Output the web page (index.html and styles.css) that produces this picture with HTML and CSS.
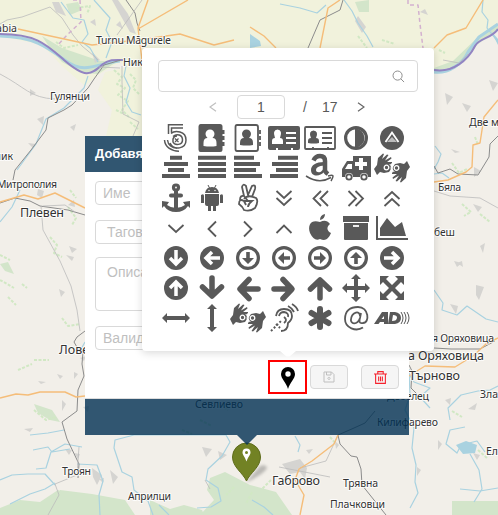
FILE: index.html
```html
<!DOCTYPE html>
<html lang="bg">
<head>
<meta charset="utf-8">
<title>Добавяне</title>
<link rel="stylesheet" href="styles.css">
</head>
<body>
<main class="map">
<svg class="tiles" viewBox="0 0 498 515">
  <path class="plain" d="M0 0H498V25L480 40 466 57 450 68 434 74 140 78 120 62 98 75 85 86 62 66 42 45 0 36Z"/>
  <path class="plain" d="M105 72L142 64V136H106L112 110 98 90Z"/>
  <g class="wood">
    <path d="M42 36L62 48 100 61 118 61 98 74 82 73 62 62 50 48Z"/>
    <path d="M0 508L20 500 40 502 58 490 70 494 68 515H0Z"/>
    <path d="M60 490L92 494 125 500 135 515H58Z"/>
    <path d="M210 478L225 472 250 485 276 492 292 515H200L214 500 207 490Z"/>
    <path d="M150 500L170 509 184 505 202 510 204 515H150Z"/>
    <path d="M452 501H498V515H452Z"/>
    <path d="M434 68L453 61 480 35 498 24V30L478 44 458 66 434 71Z"/>
    <path d="M355 2L369 0V12H359Z"/>
    <path d="M34 404L52 410 60 422 50 420 38 413ZM66 4L78 2 82 10 70 15ZM0 264L8 262 14 274 5 271Z"/>
  </g>
  <g class="scrub">
    <path d="M114 70l8 7-5 7 8 4-7 7 10 6-6 9 7 7M130 74l6 6-3 8 7 7M116 110l8 4M130 122l8 7M76 8l14-2-3 8M56 42l8 6 14-3"/>
    <path d="M50 237l7 8-3 8 8 4M68 207l8 11-4 7M70 190l6 8M0 255l10 5M0 280l14 8M8 297l8 8M22 284l5 4M18 370l14-6M34 360h15M62 318l6 8 12-2M34 410l12 10 10-3M182 430l10 4M200 420l12 6"/>
    <path d="M462 204l9 8-7 4M480 214l10 8M452 163l7 10 8-4M475 137l3 8M382 40l13 4M410 58l8 4M358 36l9 12M439 50l6 3M452 411l10 6M478 450l9 8"/>
    <path d="M220 405l8 5M234 487l-8 8M252 492l-6 12M271 480l-9 9M330 437l7 8"/>
  </g>
  <g class="town">
    <path d="M52 2l7 0 7 14-10-4zM112 0h6l10 14 8 20-6-2-8-14zM92 52l8 8-5 3zM30 89l6 4-6 3zM28 143l8 1-3 4zM70 127l6-3-2 7zM116 25l4-4 3 8zM68 205l6-5 1 7zM90 22l5-3 1 7zM38 189l6 2-2 7-5-3zM66 255l8 2-2 4zM37 119l7-3-1 9zM80 358l6-2-2 5zM24 429l9-1-3 4zM74 372l4 2-4 5zM38 381l8 1-5 2zM92 468l10 7-5 10-4-8zM74 453l6 1-2 5z"/>
    <path d="M358 16l8 11-4 6-7-12zM445 93l8 4-6 8zM462 103l9 3-4 6zM489 80l9 3-5 8zM474 167l7 4-7 6zM451 149l9 3-5 1zM473 204l9 3-4 5zM450 304l8 2-2 8zM457 263l5-2 1 6zM476 285l8 2-5 13-3-5zM480 246l5-3-2 10zM454 261l8 2-5 4zM445 400l6-2-1 7zM468 409l9-6-2 7zM438 440l4 4-4 6zM306 450l7-1-4 5zM335 441l4 4-3 4zM282 464l18-5 7 9-2 11-5-7-10 2zM405 361l4 8-4 4zM417 467l4 3-4 6zM202 447l10 2-6 8zM218 451l9 4-7 5zM110 470l8 7-5 7z"/>
    <path d="M124 188l7 8-5 5zM102 204l8 4-5 7zM126 211l8-6-1 8zM59 289l6 3-4 5zM81 350l5-3-1 7zM62 400l4 4-4 7zM65 449l7 1-3 5zM83 407l6-1-1 6zM99 479l5-1-1 5zM400 342h8l-4 7zM473 453l7 2-3 5zM420 12l5-3 3 6zM69 246l8 3-5 4zM57 374l6 2-3 3z"/>
  </g>
  <g class="water">
    <path d="M61 2L73 18 84 20 88 34 82 42 90 48 98 62M94 0L110 18 106 30 112 42 106 58"/>
    <path d="M88 76L84 88 64 108 46 119 36 144 17 170M20 190L12 207 0 222M126 66L124 76 130 88 126 102 132 112 141 115"/>
    <path d="M280 4L300 8 317 13 326 5M344 0L352 11 358 23 367 36 373 47M483 0L482 12 488 20 487 28 498 42"/>
    <path d="M435 146L441 154 438 162 434 169M434 174L442 173 449 178M434 290L443 303 442 310 457 315 467 306 486 319 498 322"/>
    <path d="M80 351l5-9M30 435L48 433 64 430M33 450L48 447 52 452 70 449M36 469L46 468 51 452 65 444 82 447"/>
    <path d="M0 480L12 475 28 474 45 474 55 485M10 504L30 494 45 489 55 483M77 464L97 465 103 481 99 495 100 515"/>
    <path d="M226 435L134 435 115 440 114 448 122 472 132 477 134 490 148 501 153 515M159 505L169 515M226 435L230 442 222 456 208 469 206 480 218 488 221 501 211 507 197 508"/>
    <path d="M409 369L410 395 405 410 414 428 412 448 416 465 415 482 418 493 410 508M465 427L450 430 446 444 457 453 461 445 477 441 485 452M450 420L448 408 461 395 478 391 490 390 498 386M470 454L479 470 482 489 474 502"/>
    <path d="M409 374L414 382 430 388 420 397 430 408M252 500L264 507 273 515M460 489L480 491 498 488M295 436L300 445 298 452"/>
  </g>
  <path class="lake" d="M250 34L260 41 261 46 250 48ZM456 445L466 441 477 445 475 453 463 454ZM491 31L498 39 498 45Z"/>
  <path class="river-edge" d="M0 36C35 37 47 47 66 61S98 63 120 61"/>
  <path class="river-edge" d="M434 72C449 74 463 63 468 52L479 37 498 24"/>
  <path class="danube" d="M0 34C37 34 47 45 64 60C85 78 90 76 103 64C110 59 116 60 123 60M434 70C453 73 468 60 475 46C479 38 491 39 498 29"/>
  <g class="rail">
    <path d="M121 60L104 65 94 79 88 88 72 105 64 110 48 118 46 130 31 150 15 170 13 180M126 0L135 13 137 23 140 31M308 48L320 20 340 10 343 0"/>
    <path d="M0 203L15 198 30 201 40 206 68 210 85 215M85 331L77 337 74 342 78 349 83 352 82 364 84 376 78 390 77 411 62 422 67 439 79 464 78 478"/>
    <path d="M434 166L438 173 450 169 458 174 478 175 489 157 490 144 498 136M409 365L412 371 411 388 420 397M338 435L354 428 365 423 375 411M338 435L340 444 351 456 357 457 361 469 362 485 374 500 386 515M434 348L451 349 480 349 495 341"/>
  </g>
  <g class="road">
    <path d="M0 74C25 87 30 98 55 99M0 24L7 20 22 17 50 7 62 18 73 35 82 46 94 56 98 60M142 0L117 35M99 67L120 68M41 206L43 230 60 261 71 286 77 310 80 331M79 447L77 475 55 484 59 495 48 515M43 206L65 205 75 212M122 66V82L123 114 139 122 133 136"/>
    <path d="M443 60L459 63 468 54M434 191L450 196 480 198 498 208M205 480L210 489M338 435L326 461 300 468M279 467L330 477"/>
  </g>
  <path class="region" d="M73 0H80L81 22 67 35 58 45M408 0V5H418L420 24 423 48"/>
  <g class="main-road">
    <path d="M18 29L92 45 138 40 180 34 214 45 234 40M148 0L138 28 142 60M188 0L138 29M320 48L328 8 340 0M250 27L264 36 276 48M434 48L447 35 466 28 483 0"/>
    <path d="M0 202L24 195 38 199 55 193 85 208M0 398L16 394 28 395 40 392 65 392 76 397 85 396M434 182L448 180 466 172 472 167 473 145 480 143 484 117 498 100M409 376L425 366 455 367 473 356 486 344 498 338M338 435L334 444 312 461 299 469 295 480 304 495 300 515"/>
  </g>
  <g class="label">
    <text class="to-edge" x="17" y="32">abia</text>
    <text x="96" y="44" textLength="75">Turnu Măgurele</text>
    <text x="123" y="66">Никопол</text>
    <text x="50" y="100" textLength="40">Гулянци</text>
    <text class="to-edge" x="13" y="160">ник</text>
    <text x="-3" y="188" textLength="60">Митрополия</text>
    <text class="city" x="20" y="217" textLength="44">Плевен</text>
    <text class="city" x="59" y="354">Ловеч</text>
    <text x="62" y="475" textLength="29">Троян</text>
    <text x="128" y="500" textLength="43">Априлци</text>
    <text x="195" y="408" textLength="48">Севлиево</text>
    <text class="city" x="272" y="485" textLength="48">Габрово</text>
    <text x="343" y="487" textLength="35">Трявна</text>
    <text x="330" y="508" textLength="55">Плачковци</text>
    <text x="377" y="426" textLength="61">Килифарево</text>
    <text x="387" y="400" textLength="42">Дебелец</text>
    <text class="city" x="409" y="380" textLength="51">Търново</text>
    <text class="city" x="408" y="360" textLength="76">а Оряховица</text>
    <text x="432" y="342" textLength="62">я Оряховица</text>
    <text x="480" y="398">Златарица</text>
    <text x="486" y="455">Елена</text>
    <text x="469" y="126">Две могили</text>
    <text x="438" y="191" textLength="23">Бяла</text>
    <text x="434" y="236" textLength="21">беш</text>
  </g>
</svg>

<svg class="marker" viewBox="0 0 46 44">
  <path class="marker-shade" d="M17 39L30 24Q36 22 37 26 34 32 17 40Z"/>
  <path class="marker-body" d="M16.500 39C13 31 2.500 25 2.500 15A14 14 0 0 1 30.500 15C30.500 25 20 31 16.500 39Z"/>
  <path class="marker-pin" d="M16.500 19.500C15 15 12.500 13 12.500 10.500A4 4 0 0 1 20.500 10.500C20.500 13 18 15 16.500 19.500ZM16.500 9A1.500 1.500 0 1 0 16.500 12 1.500 1.500 0 0 0 16.500 9Z"/>
</svg>

<section class="popup">
  <header class="popup-head">Добавяне</header>
  <div class="popup-body">
    <div class="field">Име</div>
    <div class="field tags">Тагове</div>
    <div class="field area">Описание</div>
    <div class="field">Валидност</div>
    <div class="actions">
      <div class="pin-choice"><svg viewBox="0 0 14 22"><path fill-rule="evenodd" d="M7 22C5 15 0 12 0 7A7 7 0 0 1 14 7C14 12 9 15 7 22ZM7 4.300A2.700 2.700 0 1 0 7 9.700 2.700 2.700 0 0 0 7 4.300Z"/></svg></div>
      <div class="button save"><svg viewBox="0 0 12 12"><path d="M1 1H8.500L11 3.500V11H1ZM3.500 1V4H8V1M6 6.300A1.100 1.100 0 1 1 5.990 6.300"/></svg></div>
      <div class="button delete"><svg viewBox="0 0 12 12"><path d="M0 2.700H12M3.500 2.500V.6H8.500V2.500M1.500 3V11.400H10.500V3M4.300 5V9.500M6 5V9.500M7.700 5V9.500"/></svg></div>
    </div>
  </div>
  <footer class="popup-foot"></footer>
  <div class="popup-tip"></div>
</section>

<section class="picker">
  <div class="search"><svg viewBox="0 0 14 14"><circle cx="6" cy="6" r="4.900"/><path d="M9.600 9.600L13 13"/></svg></div>
  <nav class="pager">
    <svg class="prev" viewBox="0 0 8 10"><path d="M7 .7L1 5 7 9.300"/></svg>
    <span class="page">1</span><span class="slash">/</span><span class="total">17</span>
    <svg class="next" viewBox="0 0 8 10"><path d="M1 .7L7 5 1 9.300"/></svg>
  </nav>
  <div class="icons">
    <svg viewBox="-18 -15 36 30"><path class="l15" d="M7-13.300H-7.500V-4M7-10H-4.500V-5.500M-5-4.500C-1-8 10-7 10 2C10 11-2 13-6 5M-11.500 2C-11 9-5 13 3 13.300M-8.500 2C-8 7-4 10 1 10.300M-3-1.500C1-5 6.500-3 6.500 2C6.500 7-1 8-3 4V1Q-2-2 1-2"/><path class="l1" d="M-1 .5L2.500 4M2.500 .5L-1 4"/></svg>
    <svg viewBox="-18 -15 36 30"><path d="M-11.500-14H8Q10.500-14 10.500-11.500V-8H12.500V-4H10.500V-2H12.500V2H10.500V4H12.500V8H10.500V11.500Q10.500 14 8 14H-11.500Q-13.500 14-13.500 11.500V-11.500Q-13.500-14-11.500-14Z"/><path class="w" d="M-8.500 8V5Q-8.500 0-4.500 0Q-6.500-2-6.500-4A4.500 4.500 0 0 1 2.500-4Q2.500-2 .5 0Q4.500 0 4.500 5V8Q-1.500 9-8.500 8Z"/></svg>
    <svg viewBox="-18 -15 36 30"><path class="l2" d="M-11-13H8Q10-13 10-11V11Q10 13 8 13H-11Q-12.500 13-12.500 11V-11Q-12.500-13-11-13ZM12-8V-4M12-2V2M12 4V8"/><path d="M-8 7V5Q-8 0-4 0Q-6-2-6-4A4.500 4.500 0 0 1 3-4Q3-2 1 0Q5 0 5 5V7Q-1 8-8 7Z"/></svg>
    <svg viewBox="-18 -15 36 30"><path d="M-14-12H14Q16-12 16-10V10Q16 12 14 12H9V10H7V12H-6V10H-8V12H-14Q-16 12-16 10V-10Q-16-12-14-12Z"/><path class="w" d="M-12 6V3Q-12 0-9 0Q-12-8-6.500-8.500Q-1-8-4 0Q-1 0-1 3V6Z"/><path class="lw" d="M2-5H12M2 0H12M2 5H12"/></svg>
    <svg viewBox="-18 -15 36 30"><path class="l2" d="M-14-11H14Q15-11 15-10V10Q15 11 14 11H-14Q-15 11-15 10V-10Q-15-11-14-11ZM-7 11V9M8 11V9"/><path d="M-12 5V3Q-12 0-9 0Q-12-7-6.500-7.500Q-1-7-4 0Q-1 0-1 3V5Q-6 6-12 5Z"/><path class="l2" d="M2-5H12M2 0H12M2 5H12"/></svg>
    <svg viewBox="-18 -15 36 30"><circle class="l3" r="10.400"/><path d="M-1-9.500A9.500 9.500 0 0 1-1 9.500Z"/></svg>
    <svg viewBox="-18 -15 36 30"><circle r="12"/><path class="lw" d="M-6.500 4L0-5.500 6.500 4"/><path class="pale" d="M-5 4L0-1 5 4Z"/></svg>

    <svg viewBox="-18 -15 36 30"><path class="bars" d="M-6-10.300H6M-12-4H12M-8 2H8M-14 8H14"/></svg>
    <svg viewBox="-18 -15 36 30"><path class="bars" d="M-14-10.300H14M-14-4H14M-14 2H14M-14 8H14"/></svg>
    <svg viewBox="-18 -15 36 30"><path class="bars" d="M-14-10.300H6M-14-4H12M-14 2H8M-14 8H14"/></svg>
    <svg viewBox="-18 -15 36 30"><path class="bars" d="M-6-10.300H14M-12-4H14M-8 2H14M-14 8H14"/></svg>
    <svg viewBox="-18 -15 36 30"><path class="l5" d="M-6.500-7.500Q-4.500-12 0-12Q5-12 5-7V2Q5 4 8 6"/><path d="M4-6C-4-6-9-3-9 2C-9 9 0 9 4 4V-1C2 6-4 5-4 2Q-4-2 4-2.500Z"/><path class="l15" d="M-14 8Q-1 16.500 11 9.500M8 8Q13 6.500 13 8 13 10 11 13"/></svg>
    <svg viewBox="-18 -15 36 30"><path d="M-3-12H15V9H12A4 4 0 0 0 4 9H-3A4 4 0 0 0-11 9H-14V1L-9-7H-3Z"/><path class="w" d="M-11 1L-8-4H-4V1ZM3-10H7V-6H11V-2H7V2H3V-2H-1V-6H3Z"/><circle class="l2" cx="-7" cy="9" r="2.700"/><circle class="l2" cx="8" cy="9" r="2.700"/></svg>
    <svg viewBox="-18 -15 36 30"><g id="hands"><path id="hand" d="M-18 1L-15-3-14-10-9-14.500-8-14-10-9-5-13.500-3.500-13-7-7.500-1-11-.5-9.500-5-6 0-6V-4L-3-3.500Q0-2-1 1L-3 4-8 5-12 4-15 7Z"/><circle class="hole" cx="-5.500" cy="-.5" r="2.300"/><use href="#hand" transform="rotate(180)"/><circle class="hole" cx="4.500" cy="0" r="2.300"/><path class="gap" d="M0-5Q-2 0 0 5"/></g></svg>

    <svg viewBox="-18 -15 36 30"><circle class="l3" cx="0" cy="-10.500" r="2.500"/><path class="l4" d="M0-7V10M-5-2.500H5"/><path d="M-14 3L-7 4-9 7Q-5 10 0 10T9 7L7 4 14 3V10L12 8Q8 14 0 14T-12 8L-14 10Z"/></svg>
    <svg viewBox="-18 -15 36 30"><path d="M-7-5Q-6-11 0-11T7-5ZM-7-4H7V6Q7 8 5 8H4V13H1V8H-1V13H-4V8H-5Q-7 8-7 6ZM-11-3Q-8-5-8-2V5H-11ZM8-3Q11-5 11-2V5H8Z"/><path class="thin" d="M-4-13L-2-9M4-13L2-9"/><circle class="w" cx="-3" cy="-7.500" r=".7"/><circle class="w" cx="3" cy="-7.500" r=".7"/></svg>
    <svg viewBox="-18 -15 36 30"><path class="l2" d="M-4-2L-6-11Q-5-15-2-12L0-3 4-12Q8-14 7-9L4-1M-4 1Q0-4 8 0Q11 3 7 10Q2 14-4 12Q-5 9-9 6Q-9 0-4 3L-2 7M-8 2Q-8-3-4-2L0 3-4 3M-1 3H4Q0 6 0 9"/></svg>
    <svg viewBox="-18 -15 36 30"><path class="chev" d="M-7.500-7L0 0 7.500-7M-7.500 0L0 7 7.500 0"/></svg>
    <svg viewBox="-18 -15 36 30"><path class="chev" d="M1-7L-6.500 .5 1 8M8-7L.5 .5 8 8"/></svg>
    <svg viewBox="-18 -15 36 30"><path class="chev" d="M-7.500-7L0 .5-7.500 8M-.5-7L7 .5-.5 8"/></svg>
    <svg viewBox="-18 -15 36 30"><path class="chev" d="M-7.500 1L0-6 7.500 1M-7.500 8L0 1 7.500 8"/></svg>

    <svg viewBox="-18 -15 36 30"><path class="chev" d="M-7.500-3L0 4 7.500-3"/></svg>
    <svg viewBox="-18 -15 36 30"><path class="chev" d="M4-6.500L-3.500 1 4 8.500"/></svg>
    <svg viewBox="-18 -15 36 30"><path class="chev" d="M-4-6.500L3.500 1-4 8.500"/></svg>
    <svg viewBox="-18 -15 36 30"><path class="chev" d="M-7.500 5L0-2.500 7.500 5"/></svg>
    <svg viewBox="-18 -15 36 30"><path d="M0-6C4-8 7-8 10-4C6-1 7 3 11 5C8 12 5 13 0 11C-4 13-7 11-10 5C-13-4-8-9 0-6ZM0-8Q0-13 5-14Q5-9 0-8Z"/></svg>
    <svg viewBox="-18 -15 36 30"><path d="M-13-12H13V-6H-13ZM-12-5H12V11Q12 12 11 12H-11Q-12 12-12 11Z"/><path class="lw" d="M-3-2H3"/></svg>
    <svg viewBox="-18 -15 36 30"><path class="square" d="M-15-12V11H16"/><path d="M-12 8V0L-5-10 3-1 10-6 14 8Z"/></svg>

    <svg viewBox="-18 -15 36 30"><circle r="12"/><path class="aw" d="M0-8V5M-6 0L0 6 6 0"/></svg>
    <svg viewBox="-18 -15 36 30"><circle r="12"/><path class="aw" d="M8 0H-5M0-6L-6 0 0 6"/></svg>
    <svg viewBox="-18 -15 36 30"><circle class="l3" r="10.400"/><path d="M-1.800-6H1.800V0H6L0 6-6 0H-1.800Z"/></svg>
    <svg viewBox="-18 -15 36 30"><circle class="l3" r="10.400"/><path d="M6-1.800V1.800H0V6L-6 0 0-6V-1.800Z"/></svg>
    <svg viewBox="-18 -15 36 30"><circle class="l3" r="10.400"/><path d="M-6-1.800V1.800H0V6L6 0 0-6V-1.800Z"/></svg>
    <svg viewBox="-18 -15 36 30"><circle class="l3" r="10.400"/><path d="M-1.800 6H1.800V0H6L0-6-6 0H-1.800Z"/></svg>
    <svg viewBox="-18 -15 36 30"><circle r="12"/><path class="aw" d="M-8 0H5M0-6L6 0 0 6"/></svg>

    <svg viewBox="-18 -15 36 30"><circle r="12"/><path class="aw" d="M0 8V-5M-6 0L0-6 6 0"/></svg>
    <svg viewBox="-18 -15 36 30"><path class="arrow" d="M0-10V7M-9.500-1L0 8 9.500-1"/></svg>
    <svg viewBox="-18 -15 36 30"><path class="arrow" d="M10 1H-7M1-8.500L-8 1 1 10.500"/></svg>
    <svg viewBox="-18 -15 36 30"><path class="arrow" d="M-10 1H7M-1-8.500L8 1-1 10.500"/></svg>
    <svg viewBox="-18 -15 36 30"><path class="arrow" d="M0 10V-7M-9.500 1L0-8 9.500 1"/></svg>
    <svg viewBox="-18 -15 36 30"><path d="M0-14L5-9H2V-2H9V-5L14 0 9 5V2H2V9H5L0 14-5 9H-2V2H-9V5L-14 0-9-5V-2H-2V-9H-5Z"/></svg>
    <svg viewBox="-18 -15 36 30"><path d="M-12-12H-3L-6-9 0-3 6-9 3-12H12V-3L9-6 3 0 9 6 12 3V12H3L6 9 0 3-6 9-3 12H-12V3L-9 6-3 0-9-6-12-3Z"/></svg>

    <svg viewBox="-18 -15 36 30"><path d="M-14 0L-9-5V-2H9V-5L14 0 9 5V2H-9V5Z"/></svg>
    <svg viewBox="-18 -15 36 30"><path d="M0-14L5-9H2V9H5L0 14-5 9H-2V-9H-5Z"/></svg>
    <svg viewBox="-18 -15 36 30"><use href="#hands"/></svg>
    <svg viewBox="-18 -15 36 30"><path class="l2" d="M-8-2Q-7-9 0-9Q8-9 8-2Q8 2 4 5Q4 13-3 13M-5-2Q-4-6 0-6Q5-5 4-1M0-1Q4 2 0 5M4-12Q8-10 10-6M8-14Q13-11 14-7"/><path class="dots" d="M-13 13L-3 3M-8 6L-4 10"/></svg>
    <svg viewBox="-18 -15 36 30"><path class="asterisk" d="M0-9V9M-8.500-5L8.500 5M-8.500 5L8.500-5"/></svg>
    <svg viewBox="-18 -15 36 30"><path class="l2" d="M7 9.500C0 14-11 10-11 1C-11-7-6-11 2-11C13-11 14 5 7 5C3 6 3 3 4 0L5-5M4 0C1 8-6 6-5 1C-4-6 4-8 4-2"/></svg>
    <svg viewBox="-18 -15 36 30"><path fill-rule="evenodd" d="M-18 6L-10-6H-4V6H-8V4H-12L-13.500 6ZM-8-2L-10.500 1H-8ZM-2-6H3Q9-5 9 0T3 6H-4ZM1-3L0 3Q5 3 5-.5Q5-3 1-3Z"/><path class="thin" d="M9-6Q13 0 9 6M12-6Q16 0 12 6M15-6Q19 0 15 6"/></svg>
  </div>
  <div class="picker-tip"></div>
</section>
</main>
</body>
</html>
```

FILE: styles.css
```css
* { box-sizing: border-box; }
body { margin: 0; font: 14px "Liberation Sans", sans-serif; }
svg { display: block; }
.map { position: relative; width: 498px; height: 515px; overflow: hidden; background: #f2efe9; }
.tiles { width: 498px; height: 515px; fill: none; stroke-linejoin: round; }
.plain { fill: #f1f2dc; }
.wood { fill: #d3e5ca; }
.scrub { stroke: #d1e8c4; stroke-width: 2; stroke-dasharray: 3 1.5; }
.town { fill: #d5d4d1; }
.water { stroke: #a9d2e0; stroke-width: 1.2; }
.lake { fill: #a9d2e0; }
.river-edge { stroke: #a9d2e0; stroke-width: 3; }
.danube { stroke: #9284c2; stroke-width: 2; }
.rail { stroke: #8c8c8c; stroke-width: 1; }
.road { stroke: #bbb; stroke-width: .8; }
.main-road { stroke: #f5bd79; stroke-width: 1.4; }
.region { stroke: #d3b1cf; stroke-width: 1.5; stroke-dasharray: 4 3; }
.label { font: 10.500px "Noto Sans", sans-serif; fill: #333; stroke: #fff; stroke-width: 2px; stroke-opacity: .8; paint-order: stroke; }
.label .city { font-size: 12.500px; }
.label .to-edge { text-anchor: end; }

.marker { position: absolute; left: 230px; top: 442px; width: 46px; height: 44px; }
.marker-shade { fill: #555; opacity: .35; filter: blur(1.500px); }
.marker-body { fill: #728224; stroke: #5f6d1c; stroke-width: 1; }
.marker-pin { fill: #fff; fill-rule: evenodd; }

.popup { position: absolute; left: 85px; top: 136px; width: 324px; }
.popup-head, .popup-foot { height: 36px; background: rgba(0, 47, 83, .8); }
.popup-head { padding: 0 10px; line-height: 36px; font-size: 13px; font-weight: bold; color: #fff; }
.popup-body { height: 227px; padding: 9px 10px 0; background: #fff; border-bottom: 1px solid #ddd; }
.popup-tip { width: 20px; height: 10px; margin: 0 auto; background: rgba(0, 47, 83, .8); clip-path: polygon(0 0, 100% 0, 50% 100%); }
.field { height: 24px; margin-bottom: 15px; padding: 0 7px; border: 1px solid #d9d9d9; border-radius: 4px; line-height: 22px; color: #bfbfbf; }
.tags { margin-bottom: 13px; padding-left: 11px; }
.area { height: 54px; padding: 3px 11px; }
.actions { display: flex; align-items: center; justify-content: flex-end; margin-top: -5px; height: 34px; }
.pin-choice { display: flex; align-items: center; justify-content: center; width: 39px; height: 34px; padding-top: 1px; border: 2px solid #f00; }
.pin-choice svg { width: 14px; height: 22px; }
.button { display: flex; align-items: center; justify-content: center; width: 38px; height: 24px; background: #f5f5f5; border: 1px solid #d9d9d9; border-radius: 4px; }
.button svg { width: 13px; height: 13px; fill: none; stroke: #bfbfbf; }
.save { margin: 0 13px 0 3px; }
.save svg { width: 12px; height: 12px; }
.delete svg { stroke: #f5222d; }

.picker { position: absolute; left: 142px; top: 48px; width: 292px; height: 303px; padding: 12px 16px; background: #fff; border-radius: 4px; box-shadow: 0 2px 8px rgba(0, 0, 0, .15); color: #595959; }
.search { display: flex; align-items: center; justify-content: flex-end; height: 32px; padding-right: 12px; border: 1px solid #d9d9d9; border-radius: 4px; }
.search svg { width: 13px; height: 13px; fill: none; stroke: #858585; }
.pager { display: flex; align-items: center; height: 24px; margin: 3px 0 4px 51px; }
.pager svg { width: 8px; height: 10px; fill: none; stroke: #666; stroke-width: 1.200; }
.pager .prev { stroke: #bfbfbf; }
.page { width: 48px; height: 24px; margin-left: 20px; border: 1px solid #d9d9d9; border-radius: 4px; line-height: 22px; text-align: center; }
.slash { margin-left: 18px; }
.total { margin: 0 20px 0 15px; }
.icons { display: grid; grid-template-columns: repeat(7, 36px); grid-auto-rows: 30px; }
.icons svg { width: 36px; height: 30px; fill: #595959; overflow: visible; }
.icons .w { fill: #fff; }
.icons .pale { fill: #bbb; }
.l1, .l15, .l2, .l3, .l4, .l5, .lw, .aw, .bars, .chev, .arrow, .square, .asterisk, .thin, .dots, .gap { fill: none; stroke: #595959; }
.l1 { stroke-width: 1.200; }
.l15 { stroke-width: 1.500; }
.l2 { stroke-width: 1.800; }
.icons .l3 { fill: none; stroke-width: 3.200; }
.l4 { stroke-width: 4; stroke-linecap: round; }
.l5 { stroke-width: 4.500; }
.lw { stroke: #fff; stroke-width: 1.800; }
.aw { stroke: #fff; stroke-width: 3.500; }
.bars { stroke-width: 4; }
.chev { stroke-width: 1.800; }
.arrow { stroke-width: 5.500; stroke-linecap: round; stroke-linejoin: round; }
.square { stroke-width: 2; }
.asterisk { stroke-width: 6; stroke-linecap: round; }
.thin { stroke-width: 1; }
.dots { stroke-width: 2; stroke-dasharray: 2 2; }
.hole { fill: #595959; stroke: #fff; stroke-width: 1.300; }
.gap { stroke: #fff; stroke-width: 1; }
.picker-tip { position: absolute; left: 138px; top: 303px; width: 16px; height: 6px; background: #fff; clip-path: polygon(0 0, 100% 0, 60% 90%, 40% 90%); }
```
